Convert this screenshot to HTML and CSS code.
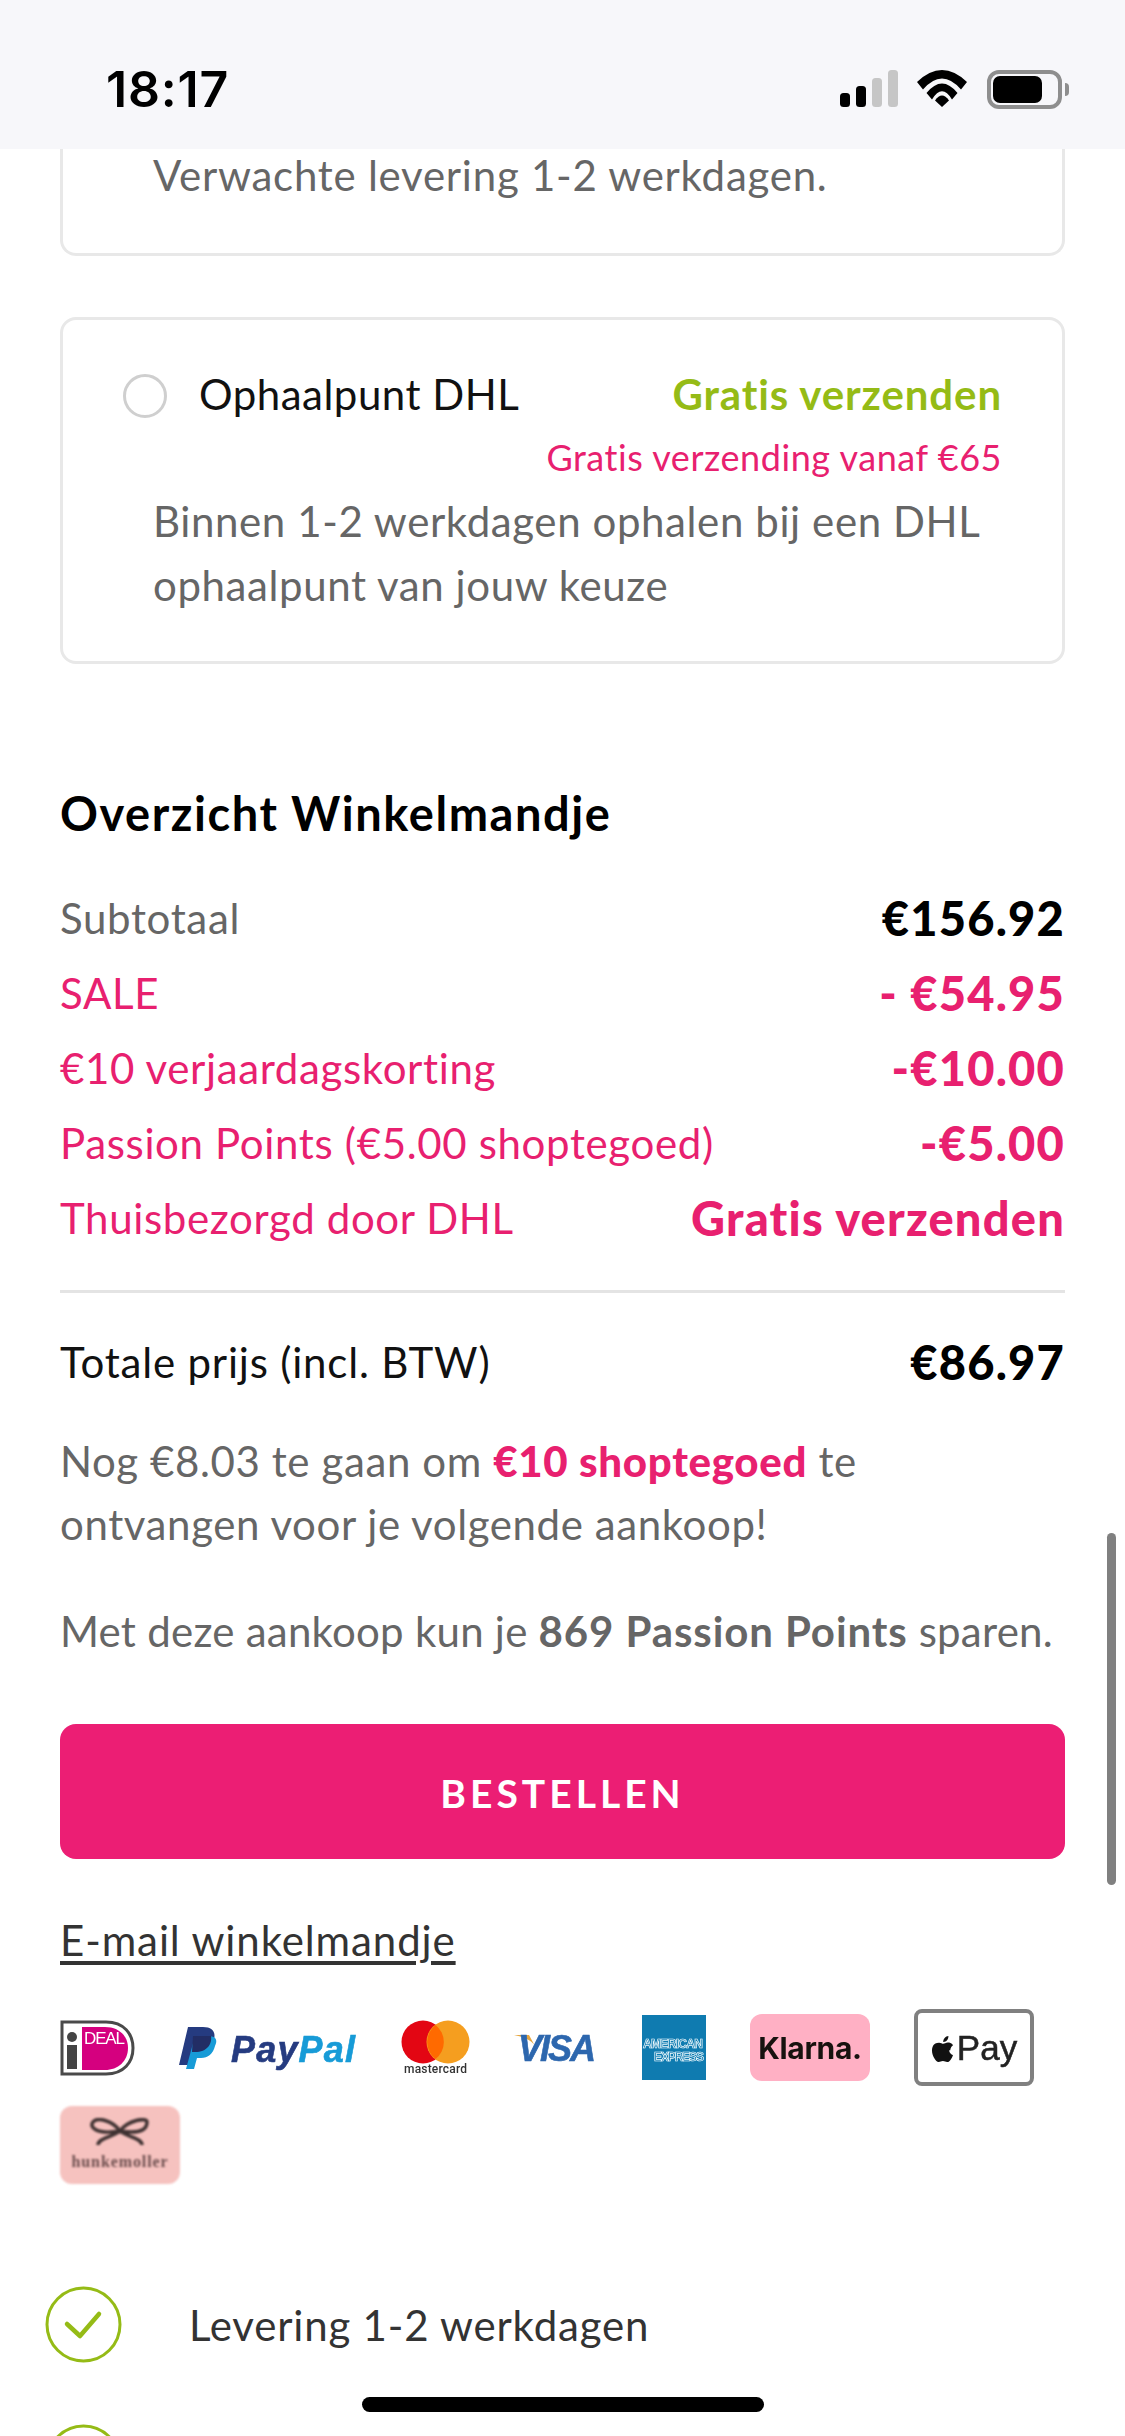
FILE: index.html
```html
<!DOCTYPE html>
<html lang="nl">
<head>
<meta charset="utf-8">
<title>Winkelmandje</title>
<link rel="stylesheet" href="styles.css">
</head>
<body>
<div class="phone">
  <header class="status">
    <span class="time">18:17</span>
    <div class="status-icons">
      <svg class="signal" viewBox="0 0 58 37" width="58" height="37"><rect x="0" y="23" width="10" height="14" rx="3.500" fill="#000"/><rect x="16" y="16" width="10" height="21" rx="3.500" fill="#000"/><rect x="32" y="8" width="10" height="29" rx="3.500" fill="#c6c6c6"/><rect x="48" y="0" width="10" height="37" rx="3.500" fill="#c6c6c6"/></svg>
      <svg class="wifi" viewBox="0 0 50 37" width="50" height="37"><path d="M0 12Q25-12 50 12L44 19.500Q25-2.500 6 19.500Z" fill="#000"/><path d="M9.500 23Q25 4 40.500 23L35 29.500Q25 13 15 29.500Z" fill="#000"/><path d="M18 30.500Q25 20.500 32 30.500L25 37Z" fill="#000"/></svg>
      <div class="battery"><div class="battery-level"></div></div>
    </div>
  </header>
  <main class="content">
    <section class="card card-cut">
      <p class="card-text">Verwachte levering 1-2 werkdagen.</p>
    </section>
    <section class="card card-full">
      <div class="option-row">
        <span class="radio"></span>
        <span class="option-name">Ophaalpunt DHL</span>
        <span class="option-price">Gratis verzenden</span>
      </div>
      <div class="option-note">Gratis verzending vanaf €65</div>
      <p class="card-text">Binnen 1-2 werkdagen ophalen bij een DHL ophaalpunt van jouw keuze</p>
    </section>

    <h2 class="summary-title">Overzicht Winkelmandje</h2>
    <div class="line"><span>Subtotaal</span><b class="amount dark">€156.92</b></div>
    <div class="line pink"><span>SALE</span><b class="amount">- €54.95</b></div>
    <div class="line pink"><span>€10 verjaardagskorting</span><b class="amount">-€10.00</b></div>
    <div class="line pink"><span>Passion Points (€5.00 shoptegoed)</span><b class="amount">-€5.00</b></div>
    <div class="line pink"><span>Thuisbezorgd door DHL</span><b class="amount">Gratis verzenden</b></div>
    <div class="divider"></div>
    <div class="line total"><span>Totale prijs (incl. BTW)</span><b class="amount dark">€86.97</b></div>
    <p class="info">Nog €8.03 te gaan om <b class="pink-strong">€10 shoptegoed</b> te ontvangen voor je volgende aankoop!</p>
    <p class="info points">Met deze aankoop kun je <b class="points-strong">869 Passion Points</b> sparen.</p>
    <button class="order" type="button">BESTELLEN</button>
    <a class="mail" href="#">E-mail winkelmandje</a>

    <div class="payments">
      <svg class="logo" viewBox="0 0 75 56" width="75" height="56">
        <path d="M2 2H46C64 2 73 14 73 28S64 54 46 54H2Z" fill="#fff" stroke="#4a4a4a" stroke-width="3"/>
        <path d="M22 7H45C58 7 68 15 68 28S58 50 45 50H22Z" fill="#d5007f"/>
        <circle cx="12" cy="17" r="5" fill="#444"/>
        <rect x="7" y="25" width="10" height="24" fill="#444"/>
        <text class="ideal-text" x="24" y="24" textLength="41">DEAL</text>
      </svg>
      <svg class="logo" viewBox="0 0 178 50" width="178" height="50">
        <g transform="translate(0 4)">
          <path d="M9 0H24C33 0 37 5 35 12C33 21 26 25 18 25H13L10 38H0Z" fill="#253b80"/>
          <path d="M16 9H29C37 9 39 13 36 19C34 27 29 31 22 31H18L15 42H7Z" fill="#179bd7"/>
          <path d="M14 9H32C33 15 30 24 18 25H13Z" fill="#222d65"/>
          <text class="paypal-text" x="52" y="35" textLength="124"><tspan class="pay">Pay</tspan><tspan class="pal">Pal</tspan></text>
        </g>
      </svg>
      <svg class="logo" viewBox="0 0 69 60" width="69" height="60">
        <circle cx="22" cy="24" r="21.500" fill="#e30613"/>
        <circle cx="47" cy="24" r="21.500" fill="#f59e1f"/>
        <path d="M34.500 7a21.500 21.500 0 0 1 0 34 21.500 21.500 0 0 1 0-34Z" fill="#ff6a00"/>
        <text class="mc-text" x="3" y="55" textLength="63">mastercard</text>
      </svg>
      <svg class="logo" viewBox="0 0 84 44" width="84" height="44">
        <path d="M0 9H15L22 22C20 16 12 11 0 9Z" fill="#e6a640"/>
        <text class="visa-text" x="4" y="35" textLength="78">VISA</text>
      </svg>
      <svg class="logo" viewBox="0 0 64 65" width="64" height="65">
        <rect width="64" height="65" fill="#0f7bb0"/>
        <text class="amex-text" x="1" y="33" textLength="60">AMERICAN</text>
        <text class="amex-text" x="12" y="46" textLength="50">EXPRESS</text>
      </svg>
      <div class="klarna">Klarna.</div>
      <div class="applepay">
        <svg viewBox="0 0 22 26" width="25" height="30"><path d="M17 15c0-3 2.400-4.400 2.500-4.500-1.400-2-3.500-2.300-4.300-2.300-1.800-.2-3.500 1.100-4.400 1.100s-2.300-1.100-3.800-1C4.500 8.300 2.800 9.400 1.800 11c-2 3.500-.5 8.700 1.400 11.500 1 1.400 2.100 3 3.600 2.900 1.400-.1 2-.9 3.700-.9s2.200.9 3.700.9 2.500-1.400 3.500-2.800c1.100-1.600 1.500-3.200 1.600-3.300-.1 0-3.200-1.200-3.300-4.300ZM14.100 6.200c.8-1 1.300-2.300 1.200-3.700-1.100 0-2.500.8-3.300 1.700-.7.800-1.400 2.200-1.200 3.500 1.200.1 2.500-.6 3.300-1.500Z" fill="#111"/></svg>
        <span>Pay</span>
      </div>
      <div class="hunke">
        <svg viewBox="0 0 60 32" width="60" height="32"><path d="M30 13C22 2 7-1 3 4S6 17 30 13C54 17 57 9 57 4S38 2 30 13ZM30 13C23 19 8 20 8 27M30 13C37 19 52 20 52 27" fill="none" stroke="#3f3232" stroke-width="3.500"/></svg>
        <span>hunkemoller</span>
      </div>
    </div>

    <ul class="usps">
      <li class="usp">
        <svg class="tick" viewBox="0 0 77 77" width="77" height="77"><circle cx="38.500" cy="38.500" r="36.500" fill="none" stroke="#95bb16" stroke-width="3"/><path d="M22 38 35 50 54 28" fill="none" stroke="#95bb16" stroke-width="4.500" stroke-linecap="round" stroke-linejoin="round"/></svg>
        <span>Levering 1-2 werkdagen</span>
      </li>
      <li class="usp">
        <svg class="tick" viewBox="0 0 77 77" width="77" height="77"><circle cx="38.500" cy="38.500" r="36.500" fill="none" stroke="#95bb16" stroke-width="3"/></svg>
      </li>
    </ul>
  </main>
  <div class="scrollbar"></div>
  <div class="home-bar"></div>
</div>
</body>
</html>
```
FILE: styles.css
```css
* { box-sizing: border-box; }
html, body { margin: 0; padding: 0; background: #fff; }
.phone {
  position: relative;
  width: 1125px;
  height: 2436px;
  overflow: hidden;
  font-family: Lato, "Open Sans", sans-serif;
  color: #666;
}
.status {
  height: 149px;
  background: #f7f7fa;
  display: flex;
  justify-content: space-between;
  padding: 61px 63px 0 106px;
}
.time {
  font-family: Inter, sans-serif;
  font-weight: 600;
  font-size: 50px;
  line-height: 56px;
  color: #000;
  letter-spacing: 0.8px;
}
.status-icons { display: flex; gap: 19px; padding-top: 9px; align-items: flex-start; }
.wifi { margin-right: 1px; }
.battery {
  position: relative;
  width: 75px;
  height: 39px;
  border: 4px solid #8e8e8e;
  border-radius: 12px;
  padding: 2px;
}
.battery::after {
  content: "";
  position: absolute;
  right: -11px;
  top: 9px;
  width: 4px;
  height: 13px;
  border-radius: 0 4px 4px 0;
  background: #8e8e8e;
}
.battery-level { width: 49px; height: 100%; background: #000; border-radius: 7px; }

.content { padding: 0 60px; }
.card { border: 3px solid #e8e8e8; border-radius: 16px; background: #fff; }
.card-cut {
  border-top: 0;
  border-radius: 0 0 16px 16px;
  padding: 0 60px 51px 90px;
}
.card-cut .card-text { line-height: 53px; letter-spacing: 0.75px; }
.card-full {
  margin-top: 61px;
  padding: 42px 60px 44px 60px;
}
.card-text {
  margin: 0;
  font-size: 42px;
  line-height: 64px;
  color: #666;
  letter-spacing: 0.6px;
}
.card-full .card-text { padding-left: 30px; }
.option-row { display: flex; align-items: center; height: 63px; }
.radio {
  width: 44px;
  height: 44px;
  border-radius: 50%;
  border: 3px solid #cfcfcf;
  margin-right: 32px;
  position: relative;
  top: 2px;
}
.option-name { font-size: 42px; color: #111; letter-spacing: 0.5px; }
.option-price { margin-left: auto; font-size: 42px; font-weight: 700; color: #95bb16; letter-spacing: 0.9px; }
.option-note { text-align: right; font-size: 36px; line-height: 64px; color: #e8206f; letter-spacing: .55px; }

.summary-title {
  margin: 119px 0 37px;
  font-size: 47px;
  line-height: 60px;
  font-weight: 700;
  color: #000;
  letter-spacing: 1.55px;
}
.line {
  display: flex;
  justify-content: space-between;
  align-items: center;
  height: 75px;
  font-size: 42px;
  letter-spacing: 0.65px;
}
.pink { color: #e8206f; }
.amount { font-size: 47px; font-weight: 900; letter-spacing: 1.2px; }
.dark { color: #000; }
.divider { height: 3px; background: #e4e4e4; margin-top: 35px; margin-bottom: 31px; }
.total { color: #111; letter-spacing: 0.8px; }
.info { margin: 31px 0 0; font-size: 42px; line-height: 63px; letter-spacing: 0.6px; }
.info.points { margin-top: 44px; letter-spacing: 0.25px; }
.points-strong { letter-spacing: 0.9px; }
.pink-strong { color: #e8206f; font-weight: 900; letter-spacing: 0.7px; }
.order {
  display: block;
  width: 100%;
  height: 135px;
  margin: 61px 0 0;
  padding: 3px 0 0;
  border: 0;
  border-radius: 16px;
  background: #ec1e74;
  color: #fff;
  font-family: inherit;
  font-size: 39px;
  font-weight: 700;
  letter-spacing: 4px;
}
.mail {
  display: inline-block;
  margin-top: 55px;
  font-size: 42px;
  line-height: 52px;
  color: #333;
  letter-spacing: 0.9px;
  text-decoration: underline;
  text-decoration-thickness: 4px;
  text-underline-offset: 5px;
}
.payments {
  display: flex;
  flex-wrap: wrap;
  align-items: center;
  gap: 20px 44px;
  margin-top: 43px;
}
.logo { display: block; filter: blur(0.5px); }
.ideal-text { font: 400 17px "Liberation Sans", sans-serif; fill: #fff; }
.paypal-text { font: italic 700 36px "Liberation Sans", sans-serif; stroke-width: .6px; }
.pay { fill: #253b80; stroke: #253b80; }
.pal { fill: #179bd7; stroke: #179bd7; }
.mc-text { font: 500 12px Roboto, sans-serif; fill: #333; }
.visa-text { font: italic 700 36px "Liberation Sans", sans-serif; fill: #2d67ae; stroke: #2d67ae; stroke-width: .6px; }
.amex-text { font: 700 12px "Liberation Sans", sans-serif; fill: none; stroke: #eef9fd; stroke-width: .7px; }
.klarna {
  width: 120px;
  height: 67px;
  border-radius: 12px;
  background: #ffb0c4;
  color: #17120f;
  display: flex;
  align-items: center;
  justify-content: center;
  font: 700 30px Inter, sans-serif;
  letter-spacing: -.3px;
  filter: blur(0.6px);
}
.applepay {
  width: 120px;
  height: 77px;
  border: 4px solid #808080;
  border-radius: 8px;
  display: flex;
  align-items: center;
  justify-content: center;
  gap: 1px;
  font: 400 35px "Liberation Sans", sans-serif;
  -webkit-text-stroke: .5px #222;
  color: #222;
  filter: blur(0.6px);
}
.hunke {
  width: 120px;
  height: 78px;
  border-radius: 12px;
  background: #f6c2bf;
  display: flex;
  flex-direction: column;
  align-items: center;
  padding-top: 12px;
  filter: blur(0.8px);
}
.hunke svg { display: block; margin-bottom: 3px; }
.hunke span { font: 700 16px "Liberation Serif", serif; line-height: 17px; color: #6b4d4d; letter-spacing: .9px; }
.usps { list-style: none; margin: 102px 0 0 -15px; padding: 0; }
.usp {
  display: flex;
  align-items: center;
  gap: 67px;
  height: 77px;
  margin-bottom: 61px;
  font-size: 42px;
  color: #333;
  letter-spacing: 0.8px;
}
.tick { display: block; flex: none; }
.scrollbar {
  position: absolute;
  left: 1107px;
  top: 1533px;
  width: 9px;
  height: 352px;
  border-radius: 5px;
  background: #808080;
}
.home-bar {
  position: absolute;
  left: 362px;
  top: 2397px;
  width: 402px;
  height: 15px;
  border-radius: 8px;
  background: #000;
}
```
